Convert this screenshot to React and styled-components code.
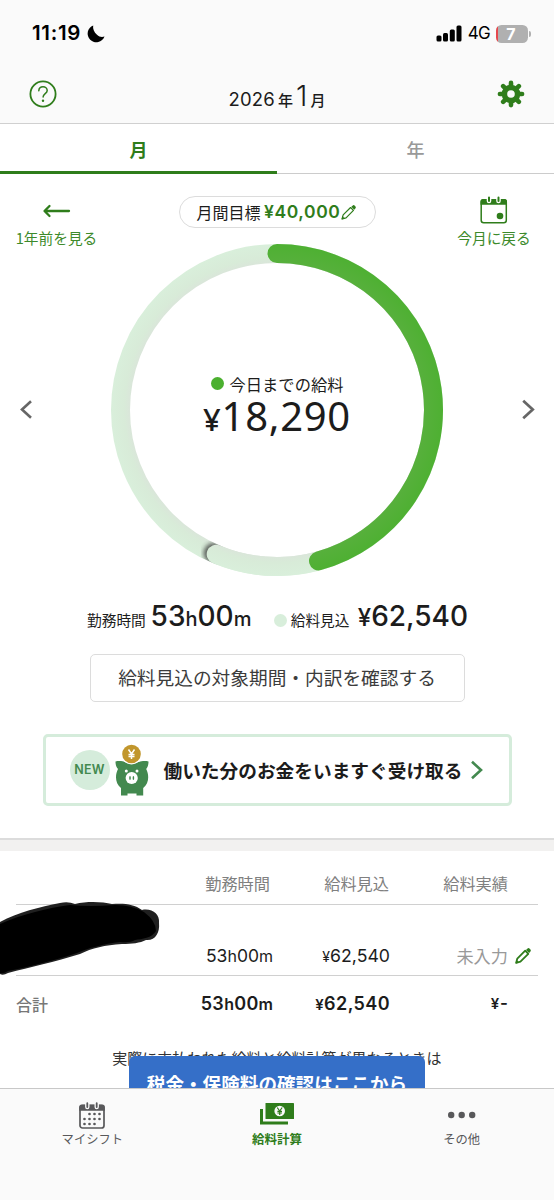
import React from 'react';
import styled, { createGlobalStyle } from 'styled-components';

const GREEN = '#2f7d1b';
const JP = `"Noto Sans CJK JP", sans-serif`;
const NUM = `Inter, "Noto Sans CJK JP", sans-serif`;

const GlobalStyle = createGlobalStyle`
    * {
        box-sizing: border-box;
    }
    body {
        margin: 0;
        background: #fff;
        font-family: ${JP};
        color: #1c1c1c;
    }
    svg {
        display: block;
        flex: none;
        overflow: visible;
    }
`;

const Screen = styled.div`
    width: 554px;
    height: 1200px;
    display: flex;
    flex-direction: column;
    overflow: hidden;
    background: #fff;
`;

/* one run of text; size, weight, tracking and colour vary */
const Text = styled.span`
    font-family: ${({ $num }) => ($num ? NUM : JP)};
    font-size: ${({ $size }) => $size}px;
    font-weight: ${({ $weight }) => $weight || 400};
    letter-spacing: ${({ $track }) => $track || 0}px;
    color: ${({ $color }) => $color || 'inherit'};
    line-height: 1;
    white-space: nowrap;
`;

const Header = styled.header`
    flex: none;
    height: 124px;
    background: #fafafa;
    border-bottom: 1px solid #d0d0d0;
`;

const StatusBar = styled.div`
    height: 64px;
    padding: 3px 23px 0 32px;
    display: flex;
    align-items: center;
    justify-content: space-between;
    color: #000;
`;

const StatusGroup = styled.div`
    display: flex;
    align-items: center;
    gap: ${({ $gap }) => $gap}px;
`;

const Battery = styled.div`
    width: 32px;
    height: 18px;
    border-radius: 5.5px;
    background: linear-gradient(90deg, #e5484d 0 2px, #b0b0b0 2px);
    display: flex;
    align-items: center;
    justify-content: center;
    padding-right: 2px;
`;

const BatteryTip = styled.div`
    width: 2px;
    height: 6px;
    margin-left: -5px;
    border-radius: 0 2px 2px 0;
    background: #b0b0b0;
`;

const TitleBar = styled.div`
    height: 59px;
    padding: 0 29px;
    display: flex;
    align-items: center;
    justify-content: space-between;
`;

const Title = styled.h1`
    margin: 0;
    padding-top: 4px;
    display: flex;
    align-items: baseline;
    font-weight: 400;
`;

const Tabs = styled.nav`
    flex: none;
    height: 50px;
    display: flex;
`;

const Tab = styled.div`
    flex: 1;
    display: flex;
    align-items: center;
    justify-content: center;
    padding-top: ${({ $active }) => ($active ? 2 : 0)}px;
    border-bottom: ${({ $active }) => ($active ? `3px solid ${GREEN}` : '1px solid #ccc')};
`;

const Main = styled.main`
    flex: none;
    height: 914px;
    overflow: hidden;
`;

const Hero = styled.section`
    height: 664px;
    display: flex;
    flex-direction: column;
    align-items: center;
`;

const TopRow = styled.div`
    width: 100%;
    height: 69px;
    display: flex;
    justify-content: space-between;
    align-items: flex-start;
`;

const Shortcut = styled.div`
    width: 120px;
    padding: 22px ${({ $inset }) => $inset || 0}px 0 0;
    display: flex;
    flex-direction: column;
    align-items: center;
    gap: 7px;
`;

const ShortcutIcon = styled.div`
    height: 28px;
    display: flex;
    align-items: center;
`;

const Goal = styled.div`
    width: 197px;
    height: 32px;
    margin-top: 22px;
    padding-right: 2px;
    border: 1.5px solid #dcdcdc;
    border-radius: 16px;
    display: flex;
    align-items: center;
    justify-content: center;
`;

const RingRow = styled.div`
    width: 100%;
    height: 333px;
    padding: 0 19px 0 20px;
    display: flex;
    align-items: center;
    justify-content: space-between;
`;

const Ring = styled.div`
    display: grid;
    place-items: center;
    > * {
        grid-area: 1 / 1;
    }
`;

const RingLabel = styled.div`
    display: flex;
    flex-direction: column;
    align-items: center;
    margin-top: -16px;
    gap: 3px;
`;

const Line = styled.div`
    display: flex;
    align-items: center;
    gap: ${({ $gap }) => $gap || 0}px;
    margin-top: ${({ $top }) => $top || 0}px;
`;

const Dot = styled.i`
    width: 13px;
    height: 13px;
    margin-top: ${({ $drop }) => $drop || 0}px;
    border-radius: 50%;
    background: ${({ $color }) => $color};
`;

const Amount = styled.div`
    font-family: "Noto Sans", sans-serif;
    font-size: 40px;
    line-height: 42px;
    letter-spacing: 0.7px;
    white-space: nowrap;
    small {
        font-size: 31px;
        font-weight: 500;
        line-height: 1;
    }
`;

const Stats = styled.div`
    height: 78px;
    padding: 2px 86px 0 87px;
    width: 100%;
    display: flex;
    justify-content: space-between;
    align-items: center;
`;

const Stat = styled.div`
    display: flex;
    align-items: baseline;
`;

const OutlineButton = styled.button`
    width: 375px;
    height: 48px;
    padding: 0;
    border: 1.5px solid #dcdcdc;
    border-radius: 5px;
    background: #fff;
    color: #3c3c3c;
`;

const Banner = styled.div`
    width: 469px;
    height: 72px;
    margin-top: 32px;
    padding: 0 26px 0 24px;
    border: 3px solid #d5ecdb;
    border-radius: 5px;
    display: flex;
    align-items: center;
`;

const NewBadge = styled.div`
    width: 40px;
    height: 40px;
    margin-right: 5px;
    border-radius: 50%;
    background: #d5ecdb;
    display: flex;
    align-items: center;
    justify-content: center;
`;

const BannerText = styled.div`
    flex: 1;
    padding-left: 15px;
    display: flex;
`;

const Gap = styled.div`
    height: 13px;
    border-top: 2px solid #dcdcdc;
    background: #f2f1f0;
`;

const Table = styled.section`
    position: relative;
    height: 180px;
    padding: 0 16px;
`;

const Row = styled.div`
    height: ${({ $height }) => $height}px;
    padding-top: ${({ $top }) => $top || 0}px;
    border-bottom: ${({ $last }) => ($last ? 'none' : '1px solid #d0d0d0')};
    display: grid;
    grid-template-columns: 120px 137px 117px 118px 30px;
    align-items: center;
`;

const Cell = styled.div`
    display: flex;
    align-items: baseline;
    justify-content: ${({ $left }) => ($left ? 'flex-start' : 'flex-end')};
    padding-right: ${({ $pad }) => $pad || 0}px;
`;

const Marker = styled.svg`
    position: absolute;
    left: 0;
    top: 49px;
`;

const Note = styled.div`
    height: 25px;
    padding-top: 19px;
    display: flex;
    justify-content: center;
    color: #333;
`;

const TaxButton = styled.div`
    position: relative;
    width: 296px;
    height: 54px;
    margin: 0 auto;
    border-radius: 6px;
    background: #356fc8;
    color: #fff;
    display: flex;
    align-items: center;
    justify-content: center;
`;

const BottomNav = styled.nav`
    flex: none;
    height: 112px;
    border-top: 1px solid #c8c8c8;
    background: #fafafa;
    display: flex;
`;

const NavItem = styled.div`
    flex: 1;
    padding-top: 12px;
    display: flex;
    flex-direction: column;
    align-items: center;
    gap: 3px;
    color: ${({ $active }) => ($active ? GREEN : '#58585a')};
`;

const NavIcon = styled.div`
    height: 29px;
    padding-bottom: ${({ $lift }) => $lift || 0}px;
    display: flex;
    align-items: center;
`;

const MoonIcon = () => (
    <svg width="18" height="18" viewBox="0 0 18 18">
        <path d="M6.2.4A8.700 8.700 0 1 0 17.500 11.500C15 12.500 12.300 12 10 9.800C7 7 5.600 3.500 6.200.4Z" fill="#000" />
    </svg>
);

const SignalIcon = () => (
    <svg width="26" height="17" viewBox="0 0 26 17">
        <rect x="0.500" y="10.500" width="5" height="6" rx="1.500" />
        <rect x="7" y="8" width="5" height="8.500" rx="1.500" />
        <rect x="13.800" y="4.500" width="5" height="12" rx="1.500" />
        <rect x="20.500" y="0.500" width="5" height="16" rx="1.500" />
    </svg>
);

const HelpIcon = () => (
    <svg width="28" height="28" viewBox="0 0 28 28" fill="none" stroke={GREEN}>
        <circle cx="14" cy="14" r="12.6" strokeWidth="1.8" />
        <path d="M9.800 10.700c.2-2.500 1.900-3.900 4.200-3.900s4.200 1.500 4.200 3.700c0 3.200-4.100 3.100-4.100 6.500" strokeWidth="1.500" strokeLinecap="round" />
        <circle cx="14" cy="20.800" r="1.200" fill={GREEN} stroke="none" />
    </svg>
);

const GearIcon = () => (
    <svg width="28" height="28" viewBox="0 0 28 28">
        <g stroke={GREEN} strokeWidth="4.600" strokeLinecap="round">
            {[0, 45, 90, 135].map((a) => (
                <path key={a} d="M14 2.900V25.100" transform={`rotate(${a} 14 14)`} />
            ))}
        </g>
        <circle cx="14" cy="14" r="9.300" fill={GREEN} />
        <circle cx="14" cy="14" r="3.800" fill="#fafafa" />
    </svg>
);

const ArrowIcon = () => (
    <svg width="28" height="14" viewBox="0 0 28 14" fill="none" stroke={GREEN} strokeWidth="2.300" strokeLinecap="round" strokeLinejoin="round">
        <path d="M6.500 3 1.500 8 6.500 13M2 8H26" />
    </svg>
);

const PencilIcon = ({ size, stroke = 1.6 }) => (
    <svg width={size} height={size} viewBox="0 0 16 16">
        <path d="M1.200 14.800 2.300 10.600 10.200 2.700 13.300 5.800 5.400 13.700Z" fill="none" stroke={GREEN} strokeWidth={stroke} strokeLinejoin="round" />
        <path d="M.5 15.500 1.400 11.800 4.200 14.600ZM11 1.900 12.300.7a1.700 1.700 0 0 1 2.400 0l.6.600a1.700 1.700 0 0 1 0 2.400L14.100 5Z" fill={GREEN} />
    </svg>
);

const CalendarBackIcon = () => (
    <svg width="28" height="28" viewBox="0 0 28 28">
        <rect x="1.200" y="3.700" width="25.100" height="23" rx="2.500" fill="#fff" stroke={GREEN} strokeWidth="1.500" />
        <path d="M.5 8.800V5.500A2.500 2.500 0 0 1 3 3h21.500A2.500 2.500 0 0 1 27 5.500v3.300Z" fill={GREEN} />
        <path d="M9 2V5M18.500 2V5" stroke="#fff" strokeWidth="4.600" strokeLinecap="round" />
        <path d="M9 1.500V5M18.500 1.500V5" stroke={GREEN} strokeWidth="2" strokeLinecap="round" />
        <circle cx="20" cy="20" r="3.300" fill={GREEN} />
    </svg>
);

const Chevron = ({ flip, color, width, height }) => (
    <svg width={width} height={height} viewBox="0 0 12 18" fill="none" stroke={color} strokeWidth="2.600">
        <path d={flip ? 'M11 .8 2 9l9 8.200' : 'M1 .8 10 9l-9 8.200'} />
    </svg>
);

const PigIcon = () => (
    <svg width="34" height="52" viewBox="0 0 34 52">
        <path d="M.5 17.500c3-.8 7-.6 9.500 .6 4.500-1 9.500-1 14 0 2.500-1.200 6.500-1.400 9.500-.6 0 3-.7 5.700-2.300 7.500 3.200 6.300 2.800 14.300-3 19V51.500H21.500V49.500H12.500V51.500H6V44C.2 39.300-.2 31.300 3 25 1.200 23.200.5 20.500.5 17.500Z" fill="#43894f" />
        <circle cx="16.500" cy="10" r="10.500" fill="#fff" />
        <circle cx="16.500" cy="10" r="9.300" fill="#c1962c" />
        <path d="M13.500 5.500 16.500 10 19.500 5.500M16.500 10V15M13.500 10.400H19.500M13.500 12.600H19.500" fill="none" stroke="#fff" strokeWidth="1.500" />
        <circle cx="11.300" cy="27" r="1.500" fill="#fff" />
        <circle cx="22" cy="27" r="1.500" fill="#fff" />
        <circle cx="16.700" cy="34" r="6.100" fill="#fff" />
        <ellipse cx="15" cy="34" rx=".8" ry="1.900" fill="#43894f" />
        <ellipse cx="18.400" cy="34" rx=".8" ry="1.900" fill="#43894f" />
    </svg>
);

const ShiftIcon = () => (
    <svg width="26" height="27" viewBox="0 0 26 27">
        <rect x="1" y="3.500" width="24" height="22.500" rx="2.500" fill="none" stroke="#58585a" strokeWidth="1.700" />
        <path d="M.2 8.800V5A2.500 2.500 0 0 1 2.700 2.500h20.600A2.500 2.500 0 0 1 25.800 5v3.800Z" fill="#58585a" />
        <path d="M8.300 1.500V5M17.700 1.500V5" stroke="#fafafa" strokeWidth="4.400" strokeLinecap="round" />
        <path d="M8.300 1.200V5M17.700 1.200V5" stroke="#58585a" strokeWidth="1.800" strokeLinecap="round" />
        <g fill="#58585a">
            {[[10.500, 12], [15.500, 12], [20.500, 12], [5.500, 17], [10.500, 17], [15.500, 17], [20.500, 17], [5.500, 22], [10.500, 22], [15.500, 22]].map(([x, y]) => (
                <circle key={`${x}-${y}`} cx={x} cy={y} r="1.350" />
            ))}
        </g>
    </svg>
);

const MoneyIcon = () => (
    <svg width="34" height="22" viewBox="0 0 34 22">
        <path d="M0 6H3V18.500H28V21.500H0Z" fill={GREEN} />
        <rect x="5.500" y="0" width="28.500" height="16" rx=".6" fill={GREEN} />
        <circle cx="19.700" cy="8" r="5.300" fill="#fafafa" />
        <path d="M17.200 4.500 19.700 8 22.200 4.500M19.700 8V12M17.400 8.300H22M17.400 10H22" fill="none" stroke={GREEN} strokeWidth="1.200" />
    </svg>
);

const DotsIcon = () => (
    <svg width="28" height="8" viewBox="0 0 28 8" fill="#58585a">
        <circle cx="3.200" cy="4" r="3.200" />
        <circle cx="13.700" cy="4" r="3.200" />
        <circle cx="24.200" cy="4" r="3.200" />
    </svg>
);

const R = 156.5;
const point = (ratio) => {
    const a = ratio * Math.PI * 2;
    return [166 + R * Math.sin(a), 166 - R * Math.cos(a)];
};
const arc = (ratio) => {
    const [x, y] = point(ratio);
    return `M166 ${166 - R}A${R} ${R} 0 ${ratio > 0.5 ? 1 : 0} 1 ${x} ${y}`;
};

const SalaryRing = ({ earned, expected, goal }) => {
    const lap = (expected / goal) % 1;
    const [sx, sy] = point(lap + 0.003);
    return (
        <svg width="332" height="332" viewBox="0 0 332 332" fill="none">
            <defs>
                <radialGradient id="pale" gradientUnits="userSpaceOnUse" cx="166" cy="166" r="166">
                    <stop offset=".885" stopColor="#dae6da" />
                    <stop offset=".92" stopColor="#d8ebd8" />
                    <stop offset="1" stopColor="#d9efdb" />
                </radialGradient>
                <radialGradient id="vivid" gradientUnits="userSpaceOnUse" cx="166" cy="166" r="166">
                    <stop offset=".885" stopColor="#57b03c" />
                    <stop offset="1" stopColor="#4eb032" />
                </radialGradient>
                <filter id="soft" x="-50%" y="-50%" width="200%" height="200%">
                    <feGaussianBlur stdDeviation="2.2" />
                </filter>
                <mask id="track">
                    <circle cx="166" cy="166" r={R} stroke="#fff" strokeWidth="19" />
                </mask>
            </defs>
            <circle cx="166" cy="166" r={R} stroke="url(#pale)" strokeWidth="19" />
            <g mask="url(#track)">
                <circle cx={sx} cy={sy} r="10" fill="#333" opacity=".75" filter="url(#soft)" />
            </g>
            <path d={arc(lap)} stroke="url(#pale)" strokeWidth="19" strokeLinecap="round" />
            <path d={arc(earned / goal)} stroke="url(#vivid)" strokeWidth="19" strokeLinecap="round" />
        </svg>
    );
};

const App = () => {
    return (
        <Screen>
            <GlobalStyle />
            <Header>
                <StatusBar>
                    <StatusGroup $gap={6}>
                        <Text $num $size={20.5} $weight={600} $track={0.7}>11:19</Text>
                        <MoonIcon />
                    </StatusGroup>
                    <StatusGroup $gap={6}>
                        <SignalIcon />
                        <Text $num $size={17} $weight={400} $track={-0.7}>4G</Text>
                        <Battery>
                            <Text $num $size={16} $weight={700} $color="#fff">7</Text>
                        </Battery>
                        <BatteryTip />
                    </StatusGroup>
                </StatusBar>
                <TitleBar>
                    <HelpIcon />
                    <Title>
                        <Text $num $size={18.5} $track={0.2}>2026</Text>
                        <Text $size={15} $weight={500}>&thinsp;年&thinsp;</Text>
                        <Text $num $size={29} $weight={300}>1</Text>
                        <Text $size={15} $weight={500}>&thinsp;月</Text>
                    </Title>
                    <GearIcon />
                </TitleBar>
            </Header>
            <Tabs>
                <Tab $active><Text $size={18} $weight={700} $color={GREEN}>月</Text></Tab>
                <Tab><Text $size={18} $weight={500} $color="#999">年</Text></Tab>
            </Tabs>

            <Main>
                <Hero>
                    <TopRow>
                        <Shortcut $inset={7}>
                            <ShortcutIcon><ArrowIcon /></ShortcutIcon>
                            <Text $size={14.7} $color="#3d8a2b">1年前を見る</Text>
                        </Shortcut>
                        <Goal>
                            <Text $size={16}>月間目標</Text>
                            <Text $num $size={17.5} $weight={600} $track={0.6} $color={GREEN}>&thinsp;¥40,000</Text>
                            <PencilIcon size={15} stroke={1.3} />
                        </Goal>
                        <Shortcut>
                            <ShortcutIcon><CalendarBackIcon /></ShortcutIcon>
                            <Text $size={14.7} $color="#3d8a2b">今月に戻る</Text>
                        </Shortcut>
                    </TopRow>
                    <RingRow>
                        <Chevron flip color="#666" width={12} height={19} />
                        <Ring>
                            <SalaryRing earned={18290} expected={62540} goal={40000} />
                            <RingLabel>
                                <Line $gap={6} $top={10}>
                                    <Dot $color="#4bb02f" />
                                    <Text $size={16.3}>今日までの給料</Text>
                                </Line>
                                <Amount><small>¥</small>18,290</Amount>
                            </RingLabel>
                        </Ring>
                        <Chevron color="#666" width={13} height={19} />
                    </RingRow>
                    <Stats>
                        <Stat>
                            <Text $size={14.7}>勤務時間</Text>
                            <Text $num $size={28} $weight={450}>&thinsp;53</Text>
                            <Text $num $size={20} $weight={450}>h</Text>
                            <Text $num $size={28} $weight={450}>00</Text>
                            <Text $num $size={20} $weight={450}>m</Text>
                        </Stat>
                        <Line $gap={4}>
                            <Dot $color="#d8eedb" $drop={9} />
                            <Stat>
                                <Text $size={14.7}>給料見込</Text>
                                <Text $num $size={24} $weight={450}>&thinsp;&thinsp;¥</Text>
                                <Text $num $size={28} $weight={450}>62,540</Text>
                            </Stat>
                        </Line>
                    </Stats>
                    <OutlineButton>
                        <Text $size={18.7}>給料見込の対象期間・内訳を確認する</Text>
                    </OutlineButton>
                    <Banner>
                        <NewBadge>
                            <Text $num $size={12.5} $weight={600} $track={0.3} $color="#43894f">NEW</Text>
                        </NewBadge>
                        <PigIcon />
                        <BannerText>
                            <Text $size={18.7} $weight={700}>働いた分のお金をいますぐ受け取る</Text>
                        </BannerText>
                        <Chevron color="#43894f" width={12} height={18} />
                    </Banner>
                </Hero>
                <Gap />
                <Table>
                    <Row $height={54} $top={12}>
                        <Cell />
                        <Cell $pad={3}><Text $size={16.2} $color="#808080">勤務時間</Text></Cell>
                        <Cell $pad={1}><Text $size={16.2} $color="#808080">給料見込</Text></Cell>
                        <Cell><Text $size={16.2} $color="#808080">給料実績</Text></Cell>
                    </Row>
                    <Row $height={71} $top={31}>
                        <Cell $left />
                        <Cell>
                            <Text $num $size={17.5}>53</Text>
                            <Text $num $size={16}>h</Text>
                            <Text $num $size={17.5}>00</Text>
                            <Text $num $size={16}>m</Text>
                        </Cell>
                        <Cell>
                            <Text $num $size={14}>¥</Text>
                            <Text $num $size={17.7}>62,540</Text>
                        </Cell>
                        <Cell><Text $size={17.2} $color="#999">未入力</Text></Cell>
                        <Cell $pad={7}><PencilIcon size={16} stroke={1.8} /></Cell>
                    </Row>
                    <Row $height={55} $last>
                        <Cell $left><Text $size={16} $weight={500} $color="#777">合計</Text></Cell>
                        <Cell>
                            <Text $num $size={18} $weight={600} $track={0.3}>53</Text>
                            <Text $num $size={16} $weight={600} $track={0.3}>h</Text>
                            <Text $num $size={18} $weight={600} $track={0.3}>00</Text>
                            <Text $num $size={16} $weight={600}>m</Text>
                        </Cell>
                        <Cell>
                            <Text $num $size={15} $weight={600} $track={0.4}>¥</Text>
                            <Text $num $size={18} $weight={600} $track={0.4}>62,540</Text>
                        </Cell>
                        <Cell>
                            <Text $num $size={15} $weight={600} $track={0.8}>¥</Text>
                            <Text $num $size={17} $weight={600}>-</Text>
                        </Cell>
                    </Row>
                    <Marker width="162" height="78" viewBox="0 899 162 78">
                        <path d="M0 921C18 911 40 906 60 902Q68 900 75 903C88 900 103 901 112 903C124 902 134 903 142 909C152 907 160 913 159 922C160 932 155 940 146 939C140 942 132 943 122 943C105 944 92 947 80 953C55 961 30 966 8 972Q3 975 0 973Z" fill="#202020" />
                        <path d="M0 923C22 913 48 907 70 904Q90 906 115 904Q132 904 144 911Q156 920 156 930C152 937 142 938 135 939Q130 942 120 941C104 943 88 947 77 952C52 960 28 966 8 970Q3 973 0 972Z" fill="#000" />
                    </Marker>
                </Table>
                <Note><Text $size={15}>実際に支払われた給料と給料計算が異なるときは</Text></Note>
                <TaxButton>
                    <Text $size={18.6} $weight={700}>税金・保険料の確認はここから</Text>
                </TaxButton>
            </Main>

            <BottomNav>
                <NavItem>
                    <NavIcon><ShiftIcon /></NavIcon>
                    <Text $size={12.3} $weight={400}>マイシフト</Text>
                </NavItem>
                <NavItem $active>
                    <NavIcon $lift={3}><MoneyIcon /></NavIcon>
                    <Text $size={12.5} $weight={700}>給料計算</Text>
                </NavItem>
                <NavItem>
                    <NavIcon $lift={2}><DotsIcon /></NavIcon>
                    <Text $size={12.3} $weight={400}>その他</Text>
                </NavItem>
            </BottomNav>
        </Screen>
    );
};

export default App;
